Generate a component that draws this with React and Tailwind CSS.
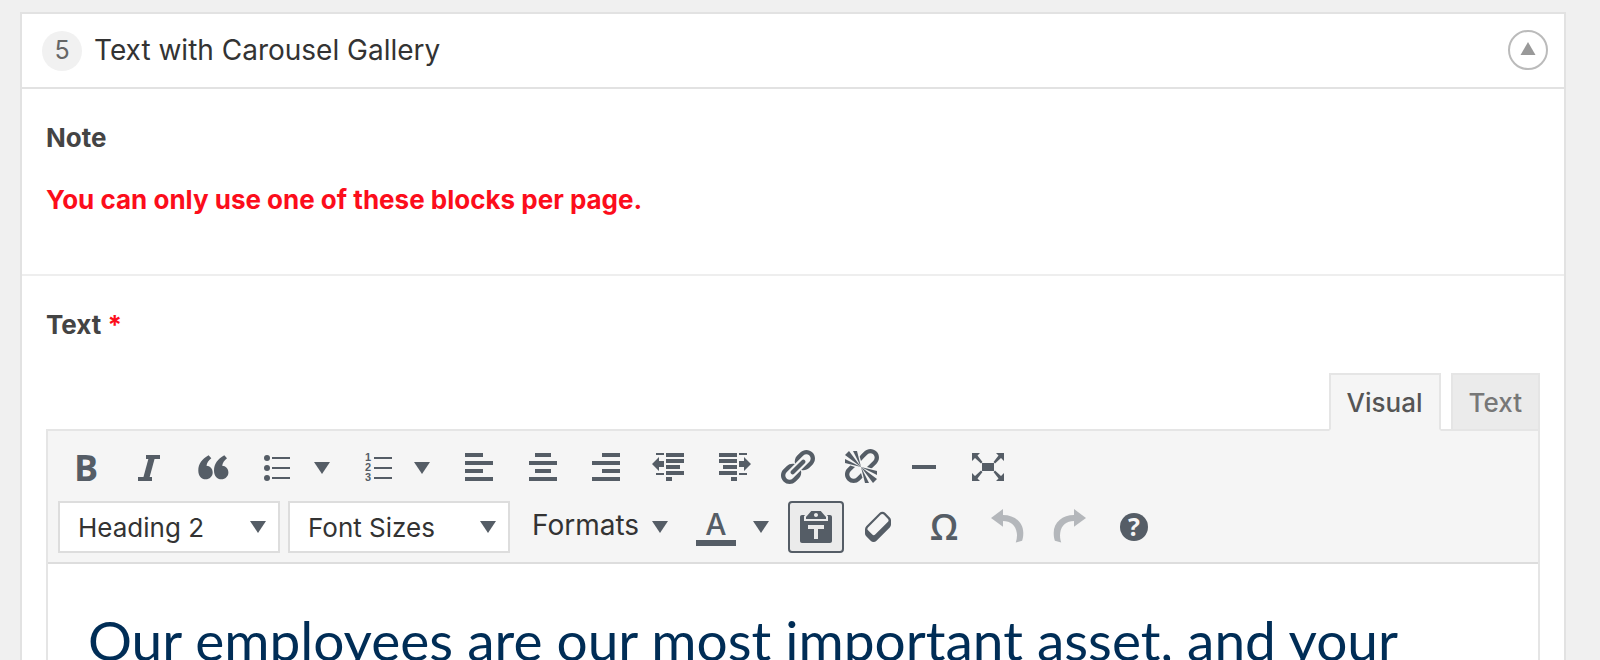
import { useState } from 'react'

const icons = {
  italic: (
    <g stroke="currentColor" fill="none">
      <line x1="16" y1="9" x2="30" y2="9" strokeWidth="4" />
      <line x1="8" y1="31" x2="22" y2="31" strokeWidth="4" />
      <line x1="22" y1="9" x2="16" y2="31" strokeWidth="6" />
    </g>
  ),
  quote: (
    <>
      <path d="M14.6 7.3C8 11 4.3 16 4.3 22.5c0 5.500 3.200 8.800 7.300 8.800 4 0 7.100-3 7.100-6.800 0-4-2.700-6.500-6.200-6.700.3-2.800 2-5.300 4.800-7.600z" />
      <path d="M30.300 7.300C23.700 11 20 16 20 22.500c0 5.500 3.200 8.800 7.300 8.800 4 0 7.100-3 7.100-6.800 0-4-2.700-6.500-6.200-6.700.3-2.800 2-5.300 4.800-7.600z" />
    </>
  ),
  ul: (
    <>
      <circle cx="9" cy="10" r="3" />
      <circle cx="9" cy="20" r="3" />
      <circle cx="9" cy="30" r="3" />
      <path d="M14 9h18v2H14zM14 19h18v2H14zM14 29h18v2H14z" />
    </>
  ),
  ol: (
    <>
      <g fontFamily="Liberation Sans, sans-serif" fontSize="11" fontWeight="700">
        <text x="7" y="13">1</text>
        <text x="7" y="23">2</text>
        <text x="7" y="33">3</text>
      </g>
      <path d="M16 9h18v2H16zM16 19h18v2H16zM16 29h18v2H16z" />
    </>
  ),
  left: <path d="M7 5h18v4H7zM7 13h28v4H7zM7 21h18v4H7zM7 29h28v4H7z" />,
  center: <path d="M13 5h16v4H13zM7 13h28v4H7zM13 21h16v4H13zM7 29h28v4H7z" />,
  right: <path d="M16 5h18v4H16zM6 13h28v4H6zM16 21h18v4H16zM6 29h28v4H6z" />,
  outdent: (
    <path d="M6 5h8v2H6zM6 25h8v2H6zM16 5h18v4H16zM16 11h18v4H16zM16 17h14v4H16zM16 23h18v4H16zM16 29h6v4h-6zM2 16l7-7v4h5v6H9v4z" />
  ),
  indent: (
    <path d="M33 5h-8v2h8zM33 25h-8v2h8zM23 5H5v4h18zM23 11H5v4h18zM23 17H9v4h14zM23 23H5v4h18zM23 29h-6v4h6zM37 16l-7-7v4h-5v6h5v4z" />
  ),
  link: (
    <path
      transform="translate(-1 -1) scale(2)"
      d="M17.74 2.76c1.68 1.69 1.68 4.41 0 6.1l-1.53 1.52c-1.12 1.12-2.7 1.47-4.14 1.09l2.62-2.61.76-.77.76-.76c.84-.84.84-2.2 0-3.04-.84-.85-2.2-.85-3.04 0l-.77.76-3.38 3.38c-.37-1.44-.02-3.02 1.1-4.14l1.52-1.53c1.69-1.68 4.42-1.68 6.1 0zM8.59 13.43l5.34-5.34c.42-.42.42-1.1 0-1.52-.44-.43-1.13-.39-1.53 0l-5.33 5.34c-.42.42-.42 1.1 0 1.52.44.43 1.13.39 1.52 0zm-.76 2.29l4.14-4.15c.38 1.44.03 3.02-1.09 4.14l-1.52 1.53c-1.69 1.68-4.41 1.68-6.1 0-1.68-1.68-1.68-4.42 0-6.1l1.53-1.52c1.12-1.12 2.7-1.47 4.14-1.1l-4.14 4.15c-.85.84-.85 2.2 0 3.05.84.84 2.2.84 3.04 0z"
    />
  ),
  unlink: (
    <path
      transform="translate(-1 -1) scale(2)"
      d="M17.74 2.26c1.68 1.69 1.68 4.41 0 6.1l-1.53 1.52c-.32.33-.69.58-1.08.77L13 10l1.69-1.64.76-.77.76-.76c.84-.84.84-2.2 0-3.04-.84-.85-2.2-.85-3.04 0l-.77.76-.76.76L10 7l-.65-2.14c.19-.38.44-.75.77-1.07l1.52-1.53c1.69-1.68 4.42-1.68 6.1 0zM2 4l8 6-6-8zm4-2l4 8-2-8H6zM2 6l8 4-8-2V6zm7.36 7.69L10 13l.74 2.35-1.38 1.39c-1.69 1.68-4.41 1.68-6.1 0-1.68-1.68-1.68-4.42 0-6.1l1.39-1.38L7 10l-.69.64-1.52 1.53c-.85.84-.85 2.2 0 3.04.84.85 2.2.85 3.04 0zM18 16l-8-6 6 8zm-4 2l-4-8 2 8h2zm4-4l-8-4 8 2v2z"
    />
  ),
  hr: <path d="M6 17h24v4H6z" />,
  fullscreen: (
    <path d="M12 15h12v8H12zM2 5h8L7.500 7.500 12.500 14 11 15.500 5 10 2 13zM34 5h-8l2.500 2.500L23.500 14 25 15.500 31 10l3 3zM2 33h8l-2.500-2.500L12.500 24 11 22.500 5 28l-3-3zM34 33h-8l2.500-2.500L23.500 24l1.500-1.500L31 28l3-3z" />
  ),
  paste: (
    <path
      transform="scale(2)"
      d="M12.38 2L15 5v1H5V5l2.64-3h4.74zM10 5c.55 0 1-.44 1-1 0-.55-.45-1-1-1s-1 .45-1 1c0 .56.45 1 1 1zm5.45-1H17c.55 0 1 .45 1 1v12c0 .56-.45 1-1 1H3c-.55 0-1-.44-1-1V5c0-.55.45-1 1-1h1.55L4 4.63V7h12V4.63zM14 11V9H6v2h3v5h2v-5h3z"
    />
  ),
  eraser: (
    <path
      transform="translate(-1 -1) scale(2)"
      d="M14.29 4.59l1.1 1.11c.41.4.61.94.61 1.47v2.12c0 .53-.2 1.07-.61 1.47l-6.63 6.63c-.4.41-.94.61-1.47.61s-1.07-.2-1.47-.61l-1.11-1.1-1.1-1.11c-.41-.4-.61-.94-.61-1.47v-2.12c0-.54.2-1.07.61-1.48l6.63-6.62c.4-.41.94-.61 1.47-.61s1.06.2 1.47.61zm-6.21 9.7l6.42-6.42c.39-.39.39-1.03 0-1.43L12.36 4.3c-.19-.19-.45-.29-.72-.29s-.52.1-.71.29l-6.42 6.42c-.39.4-.39 1.04 0 1.43l2.14 2.14c.38.38 1.04.38 1.43 0z"
    />
  ),
  undo: <path d="M3 11l12-9v6c11.300 0 20.300 7 20.300 18 0 3-.4 5.500-1.200 7.800l-6.300 1.700c1-3 1.500-6.500 1-9.500-1-8-6.500-12-13.800-12v5.700z" />,
  redo: (
    <path
      transform="translate(37 0) scale(-1 1)"
      d="M3 11l12-9v6c11.300 0 20.300 7 20.300 18 0 3-.4 5.500-1.200 7.800l-6.300 1.700c1-3 1.500-6.500 1-9.500-1-8-6.500-12-13.800-12v5.700z"
    />
  ),
  help: (
    <>
      <circle cx="18" cy="20" r="14" />
      <text x="18" y="29" textAnchor="middle" fill="#f5f5f5" fontFamily="Open Sans, sans-serif" fontSize="25" fontWeight="700">
        ?
      </text>
    </>
  ),
}

function Icon({ name }) {
  return (
    <svg viewBox="0 0 40 40" className="w-10 h-10 shrink-0" fill="currentColor" aria-hidden="true">
      {icons[name]}
    </svg>
  )
}

function Caret() {
  return (
    <svg viewBox="0 0 16 12" className="w-4 h-3 shrink-0" fill="currentColor" aria-hidden="true">
      <path d="M0 0h16L8 12z" />
    </svg>
  )
}

function ToolButton({ label, children, ...rest }) {
  return (
    <button
      type="button"
      aria-label={label}
      className="w-14 h-[52px] shrink-0 flex items-center justify-center disabled:opacity-40"
      {...rest}
    >
      {children}
    </button>
  )
}

function SplitButton({ label, children }) {
  return (
    <div className="flex shrink-0">
      <ToolButton label={label}>{children}</ToolButton>
      <button type="button" aria-label={`${label} options`} className="w-9 pr-1 flex items-center justify-center">
        <Caret />
      </button>
    </div>
  )
}

function ToolSelect({ label, options }) {
  return (
    <div className="relative w-[222px] shrink-0">
      <select
        aria-label={label}
        className="appearance-none w-full h-[52px] pl-[18px] pr-10 bg-white border-2 border-[#dddddd] text-[26px] text-[#333333]"
      >
        {options.map(o => (
          <option key={o}>{o}</option>
        ))}
      </select>
      <span className="absolute right-[14px] top-5 pointer-events-none">
        <Caret />
      </span>
    </div>
  )
}

function Toolbar() {
  return (
    <div className="bg-[#f5f5f5] border-b-2 border-[#dddddd] px-[10px] pt-[11px] pb-[9px] flex flex-col gap-[7px] text-[#555d66]">
      <div className="flex gap-2">
        <ToolButton label="Bold">
          <span className="font-['Open_Sans',sans-serif] font-bold text-[36px] leading-10">B</span>
        </ToolButton>
        <ToolButton label="Italic"><Icon name="italic" /></ToolButton>
        <ToolButton label="Blockquote"><Icon name="quote" /></ToolButton>
        <SplitButton label="Bulleted list"><Icon name="ul" /></SplitButton>
        <SplitButton label="Numbered list"><Icon name="ol" /></SplitButton>
        <ToolButton label="Align left"><Icon name="left" /></ToolButton>
        <ToolButton label="Align center"><Icon name="center" /></ToolButton>
        <ToolButton label="Align right"><Icon name="right" /></ToolButton>
        <ToolButton label="Decrease indent"><Icon name="outdent" /></ToolButton>
        <ToolButton label="Increase indent"><Icon name="indent" /></ToolButton>
        <ToolButton label="Insert link"><Icon name="link" /></ToolButton>
        <ToolButton label="Remove link"><Icon name="unlink" /></ToolButton>
        <ToolButton label="Horizontal line"><Icon name="hr" /></ToolButton>
        <ToolButton label="Fullscreen"><Icon name="fullscreen" /></ToolButton>
      </div>
      <div className="flex gap-2">
        <ToolSelect label="Block format" options={['Heading 2', 'Paragraph', 'Heading 3']} />
        <ToolSelect label="Font size" options={['Font Sizes', '12px', '16px']} />
        <button type="button" className="w-[160px] h-[52px] shrink-0 pl-[14px] pr-[10px] flex items-center justify-between">
          <span className="text-[28px] leading-8 pb-1 text-[#333333]">Formats</span>
          <Caret />
        </button>
        <div className="flex shrink-0">
          <button type="button" aria-label="Text color" className="w-14 pl-1 flex flex-col items-center justify-center">
            <span className="text-[30px] leading-8 font-medium">A</span>
            <span className="w-10 h-[6px] bg-[#555d66]" />
          </button>
          <button type="button" aria-label="Text color options" className="w-[38px] flex items-center justify-center">
            <Caret />
          </button>
        </div>
        <button
          type="button"
          aria-label="Paste as text"
          aria-pressed="true"
          className="w-14 h-[52px] shrink-0 flex items-center justify-center bg-[#ebebeb] border-2 border-[#555d66] rounded-sm"
        >
          <Icon name="paste" />
        </button>
        <ToolButton label="Clear formatting"><Icon name="eraser" /></ToolButton>
        <ToolButton label="Special character">
          <span className="font-['Open_Sans',sans-serif] font-semibold text-[36px] leading-10">Ω</span>
        </ToolButton>
        <ToolButton label="Undo" disabled><Icon name="undo" /></ToolButton>
        <ToolButton label="Redo" disabled><Icon name="redo" /></ToolButton>
        <ToolButton label="Keyboard shortcuts"><Icon name="help" /></ToolButton>
      </div>
    </div>
  )
}

const tabBase = 'relative h-[58px] px-4 border-2 text-[26px] font-medium'

function Editor() {
  const [tab, setTab] = useState('visual')
  const on = 'bg-[#f5f5f5] border-[#e5e5e5] border-b-[#f5f5f5] text-[#555555]'
  const off = 'bg-[#ebebeb] border-[#e5e5e5] text-[#777777]'
  return (
    <div>
      <div className="flex justify-end gap-[10px] -mb-[2px]">
        <button type="button" onClick={() => setTab('visual')} className={`${tabBase} ${tab === 'visual' ? on : off}`}>
          Visual
        </button>
        <button type="button" onClick={() => setTab('text')} className={`${tabBase} ${tab === 'text' ? on : off}`}>
          Text
        </button>
      </div>
      <div className="border-2 border-[#e5e5e5]">
        <Toolbar />
        <div className="px-10 pt-[42px] pb-10 bg-white">
          <h2 className="font-[Lato,sans-serif] text-[55px] leading-[68px] text-[#002d56]">
            Our employees are our most important asset, and your
          </h2>
        </div>
      </div>
    </div>
  )
}

export default function App() {
  return (
    <div className="min-h-screen bg-[#f0f0f0] pt-3 pl-5 pr-[34px] font-[Inter,sans-serif] text-[#444444]">
      <section className="bg-white border-2 border-[#e2e2e2]">
        <header className="h-[75px] pl-5 pr-4 flex items-center border-b-2 border-[#e2e2e2]">
          <span className="w-10 h-10 rounded-full bg-[#f1f1f1] flex items-center justify-center text-[25px] text-[#666666]">5</span>
          <h1 className="ml-3 pb-[2px] text-[28px] leading-9 text-[#333333]">Text with Carousel Gallery</h1>
          <button
            type="button"
            aria-label="Collapse block"
            className="ml-auto mb-[2px] w-10 h-10 rounded-full border-2 border-[#bbbbbb] text-[#999999] flex items-center justify-center"
          >
            <svg viewBox="0 0 16 16" className="w-4 h-4" fill="currentColor" aria-hidden="true">
              <path d="M8 0l7.500 13H.5z" />
            </svg>
          </button>
        </header>
        <div className="px-6 pt-[31px] pb-14 border-b-2 border-[#eeeeee] text-[26px] leading-9 font-bold">
          <h2>Note</h2>
          <p className="mt-[26px] text-[#fc0d1b]">You can only use one of these blocks per page.</p>
        </div>
        <div className="px-6 pt-[31px]">
          <h2 className="text-[26px] leading-9 font-bold mb-[30px]">
            Text <span className="text-[#fc0d1b]">*</span>
          </h2>
          <Editor />
        </div>
      </section>
    </div>
  )
}
